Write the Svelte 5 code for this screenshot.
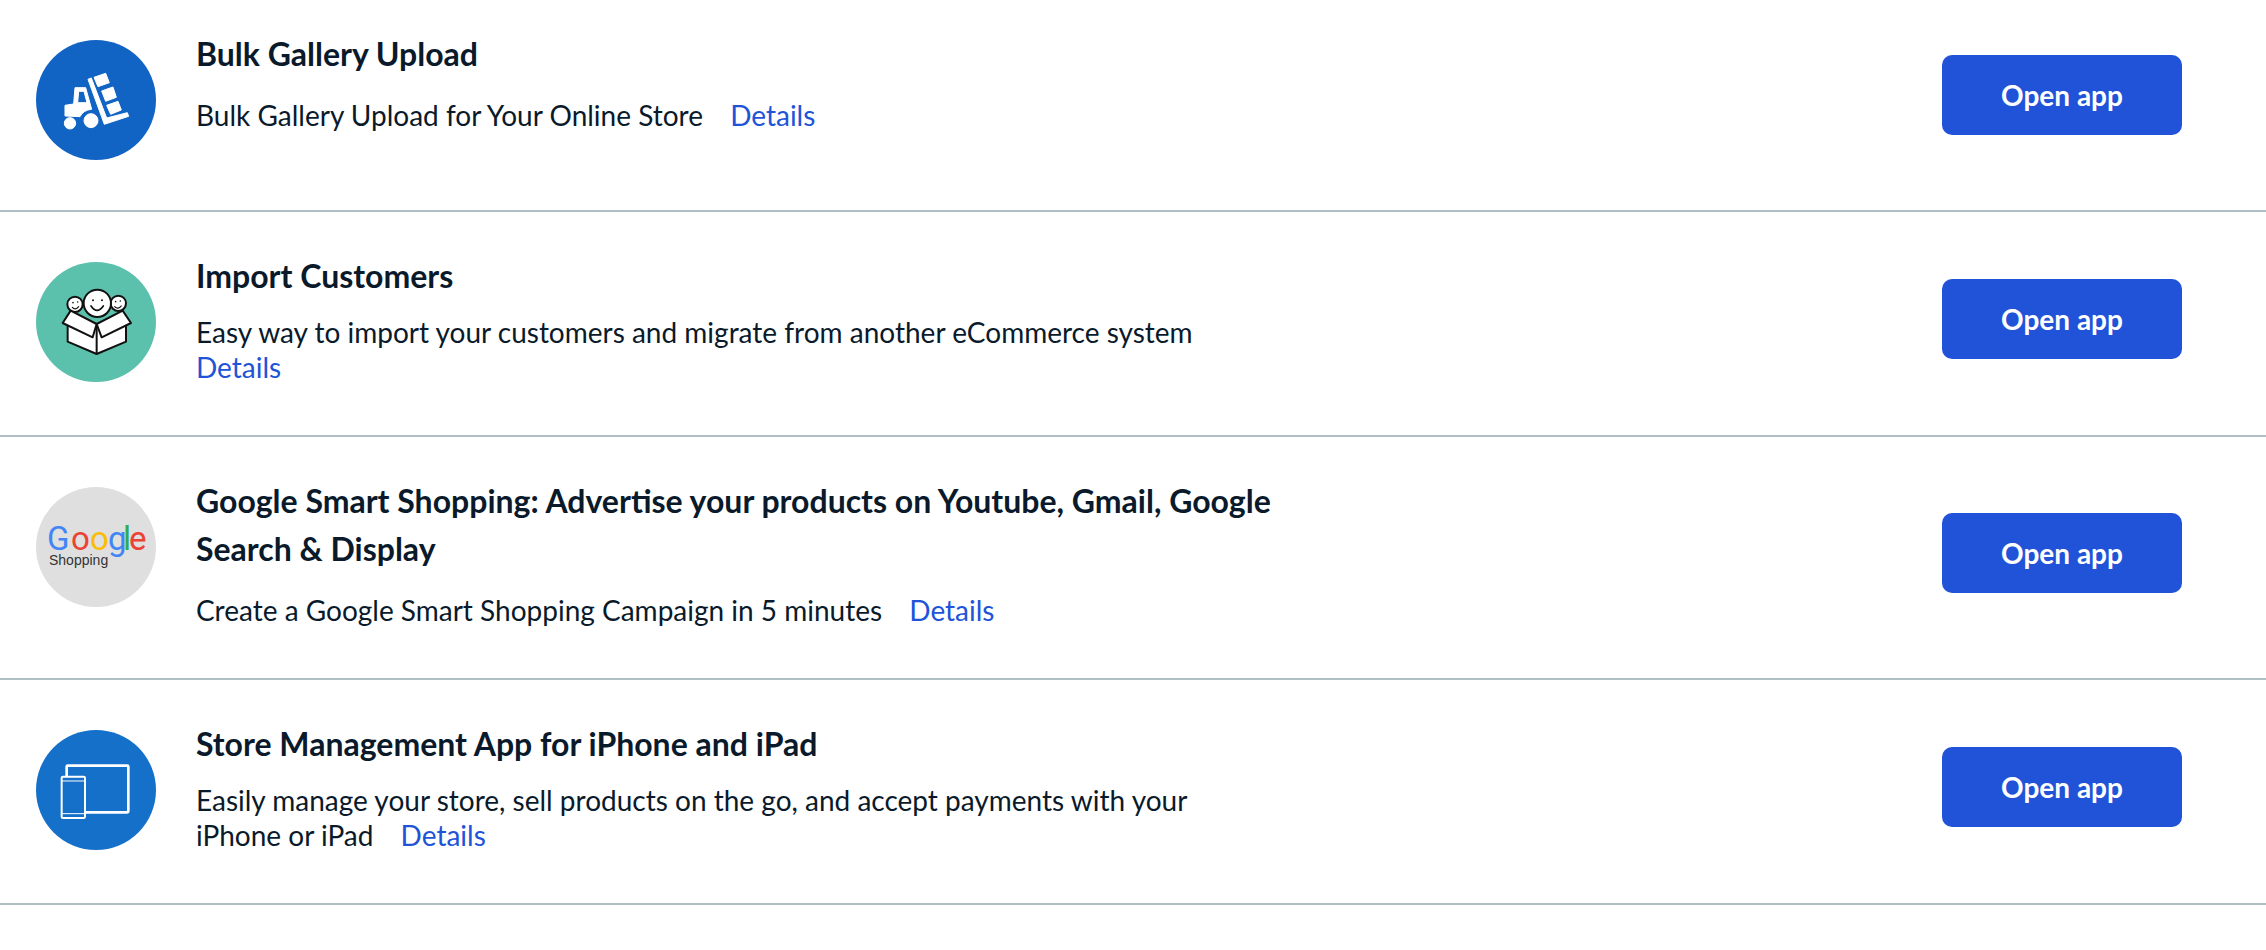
<script>
  const apps = [
    { id: 'bulk', title: 'Bulk Gallery Upload', desc: 'Bulk Gallery Upload for Your Online Store', single: true },
    { id: 'import', title: 'Import Customers', desc: 'Easy way to import your customers and migrate from another eCommerce system', single: false },
    { id: 'google', title: 'Google Smart Shopping: Advertise your products on Youtube, Gmail, Google Search & Display', desc: 'Create a Google Smart Shopping Campaign in 5 minutes', single: true },
    { id: 'mobile', title: 'Store Management App for iPhone and iPad', desc: 'Easily manage your store, sell products on the go, and accept payments with your iPhone or iPad', single: false }
  ];
</script>

<main class="list">
  {#each apps as app (app.id)}
    <section class="row">
      <div class="logo {app.id}">
        {#if app.id === 'bulk'}
          <svg viewBox="0 0 120 120" width="120" height="120" aria-hidden="true">
            <g transform="translate(-16 -10) scale(.3333)" fill="#fff" stroke="#fff" stroke-width="3" stroke-linejoin="round">
              <path fill-rule="evenodd" d="M135 226 L161 222 L165 173 L197 173 L215 238 Q190 240 180 260 L135 258 Z M176 184 L173 218 L201 218 L192 184 Z" />
              <circle cx="150" cy="280" r="17" />
              <circle cx="213" cy="272" r="21" />
              <path d="M204 148 L214 144 L260 264 L322 248 L326 259 L253 283 Z" />
              <path d="M222 142 L257 130 L268 158 L234 170 Z" />
              <path d="M245 183 L279 171 L289 202 L257 214 Z" />
              <path d="M260 226 L294 214 L304 240 L272 253 Z" />
            </g>
          </svg>
        {:else if app.id === 'import'}
          <svg viewBox="0 0 120 120" width="120" height="120" aria-hidden="true">
            <g transform="translate(-16 -12) scale(.3333)" fill="#fff" stroke="#111" stroke-width="6" stroke-linejoin="round">
              <circle cx="165" cy="163" r="23" />
              <circle cx="295" cy="160" r="23" />
              <circle cx="232" cy="160" r="41" />
              <path d="M143 222 L143 275 L230 312 L318 275 L318 222 L230 222 Z" />
              <path d="M230 222 L230 312" />
              <path d="M152 182 L128 219 L218 262 L230 222 Z" />
              <path d="M308 182 L333 219 L245 262 L230 222 Z" />
              <g fill="none" stroke-width="5" stroke-linecap="round">
                <path d="M213 168 Q231 194 250 168" />
                <path d="M157 172 Q166 182 176 170" stroke-width="3.5" />
                <path d="M284 170 Q294 180 304 168" stroke-width="3.5" />
              </g>
              <g fill="#111" stroke="none">
                <circle cx="219" cy="151" r="3" /><circle cx="246" cy="151" r="3" />
                <circle cx="159" cy="158" r="2.4" /><circle cx="173" cy="156" r="2.4" />
                <circle cx="287" cy="155" r="2.4" /><circle cx="301" cy="153" r="2.4" />
              </g>
            </g>
          </svg>
        {:else if app.id === 'google'}
          <svg viewBox="0 0 120 120" width="120" height="120" role="img">
            <text class="gword" y="63"><tspan x="11" class="blue">G</tspan><tspan x="35" class="red">o</tspan><tspan x="54" class="yellow">o</tspan><tspan x="72" class="blue">g</tspan><tspan x="87" class="green">l</tspan><tspan x="93" class="red">e</tspan></text>
            <text class="gsub" x="13" y="77.5">Shopping</text>
          </svg>
        {:else}
          <svg viewBox="0 0 120 120" width="120" height="120" aria-hidden="true">
            <g transform="translate(-16 -15) scale(.3333)" fill="none" stroke="#fff">
              <rect x="140" y="152" width="185" height="140" rx="3" stroke-width="8" />
              <rect x="125" y="185" width="70" height="124" rx="4" fill="#1470c8" stroke-width="6" />
              <path d="M125 198 H195 M125 296 H195" stroke-width="3" />
            </g>
          </svg>
        {/if}
      </div>

      <div class="info">
        <h2 class="title">{app.title}</h2>
        <p class="desc" class:single={app.single}><span class="text">{app.desc}</span> <a class="details" href="#details">Details</a></p>
      </div>

      <a class="open" href="#open">Open app</a>
    </section>
  {/each}
</main>

<style>
  :global(body) {
    margin: 0;
    background: #fff;
    font-family: Lato, "Open Sans", sans-serif;
    color: #0a1a2b;
  }
  .list {
    margin-top: -10px;
    padding: 0;
    overflow: hidden;
    min-height: 960px;
  }
  .row {
    display: flex;
    align-items: center;
    padding: 40px 84px 50px 36px;
    border-bottom: 2px solid #b0bec5;
  }
  .logo {
    flex: none;
    width: 120px;
    height: 120px;
    margin-top: 10px;
    margin-right: 40px;
    border-radius: 50%;
    overflow: hidden;
    align-self: flex-start;
  }
  .logo svg { display: block; }
  .bulk { background: #1264c4; }
  .import { background: #5bc0ac; }
  .google { background: #dfdfdf; }
  .mobile { background: #1470c8; }
  .gword {
    font-family: Roboto, sans-serif;
    font-size: 33px;
    font-weight: 400;
  }
  .blue { fill: #4285f4; }
  .red { fill: #ea4335; }
  .yellow { fill: #fbbc05; }
  .green { fill: #34a853; }
  .gsub {
    font-family: "Liberation Sans", sans-serif;
    font-size: 14px;
    fill: #333;
  }
  .info {
    flex: none;
    width: 1076px;
    min-height: 130px;
  }
  .title {
    margin: 0;
    font-size: 32px;
    font-weight: 700;
    line-height: 48px;
  }
  .desc {
    margin: 15px 0 0;
    max-width: 1060px;
    font-size: 28px;
    line-height: 35px;
  }
  .desc.single { margin-top: 20px; }
  .text { margin-right: 20px; }
  .details {
    color: #2053d8;
    text-decoration: none;
  }
  .open {
    margin-left: auto;
    flex: none;
    width: 240px;
    height: 80px;
    display: flex;
    align-items: center;
    justify-content: center;
    box-sizing: border-box;
    background: #2153d9;
    border-radius: 10px;
    color: #fff;
    font-size: 28px;
    font-weight: 700;
    text-decoration: none;
  }
</style>
